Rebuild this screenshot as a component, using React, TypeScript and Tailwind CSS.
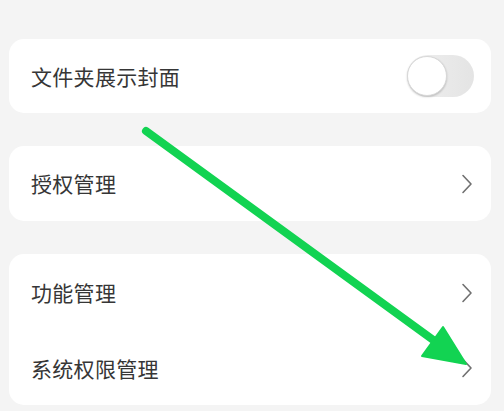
import React from "react";

const Chevron = () => (
  <svg width="12" height="20" viewBox="0 0 12 20" className="shrink-0">
    <path d="M2 1.5 L10 10 L2 18.5" fill="none" stroke="#707070" strokeWidth="1.6" strokeLinecap="round" strokeLinejoin="round" />
  </svg>
);

const Row = ({ label, children, h = "h-[75px]" }: { label: string; children: React.ReactNode; h?: string }) => (
  <div className={`flex items-center justify-between ${h} pl-[22px] pr-[18px]`}>
    <span className="text-[21px] text-[#363636] leading-none tracking-[0.3px]" style={{ fontFamily: '"Noto Sans CJK SC", "Noto Sans", sans-serif' }}>
      {label}
    </span>
    {children}
  </div>
);

export default function App() {
  return (
    <div className="relative w-[504px] h-[411px] overflow-hidden bg-[#f4f4f4]">
      <div className="flex flex-col pt-[39px] pl-[9px] gap-[33px]">
        <div className="w-[482px] bg-white rounded-[15px]">
          <Row label="文件夹展示封面" h="h-[74px]">
            <div className="relative w-[67px] h-[42px] rounded-full bg-gradient-to-r from-[#f0f0f0] to-[#e4e4e4] mr-[-1px]">
              <div className="absolute left-0 top-[1px] w-[40px] h-[40px] rounded-full bg-white border border-[#d8d8d8] shadow-[0_1px_2px_rgba(0,0,0,0.2)]" />
            </div>
          </Row>
        </div>
        <div className="w-[482px] bg-white rounded-[15px]">
          <Row label="授权管理">
            <Chevron />
          </Row>
        </div>
        <div className="w-[482px] bg-white rounded-[15px]">
          <Row label="功能管理" h="h-[77px]">
            <Chevron />
          </Row>
          <Row label="系统权限管理" h="h-[74px]">
            <Chevron />
          </Row>
        </div>
      </div>
      <svg className="absolute inset-0 pointer-events-none" width="504" height="411" viewBox="0 0 504 411">
        <line x1="146" y1="131" x2="436" y2="342" stroke="#12d352" strokeWidth="8" strokeLinecap="round" />
        <polygon points="443,327 422,356 466,364" fill="#12d352" stroke="#12d352" strokeWidth="2" strokeLinejoin="round" />
      </svg>
    </div>
  );
}
